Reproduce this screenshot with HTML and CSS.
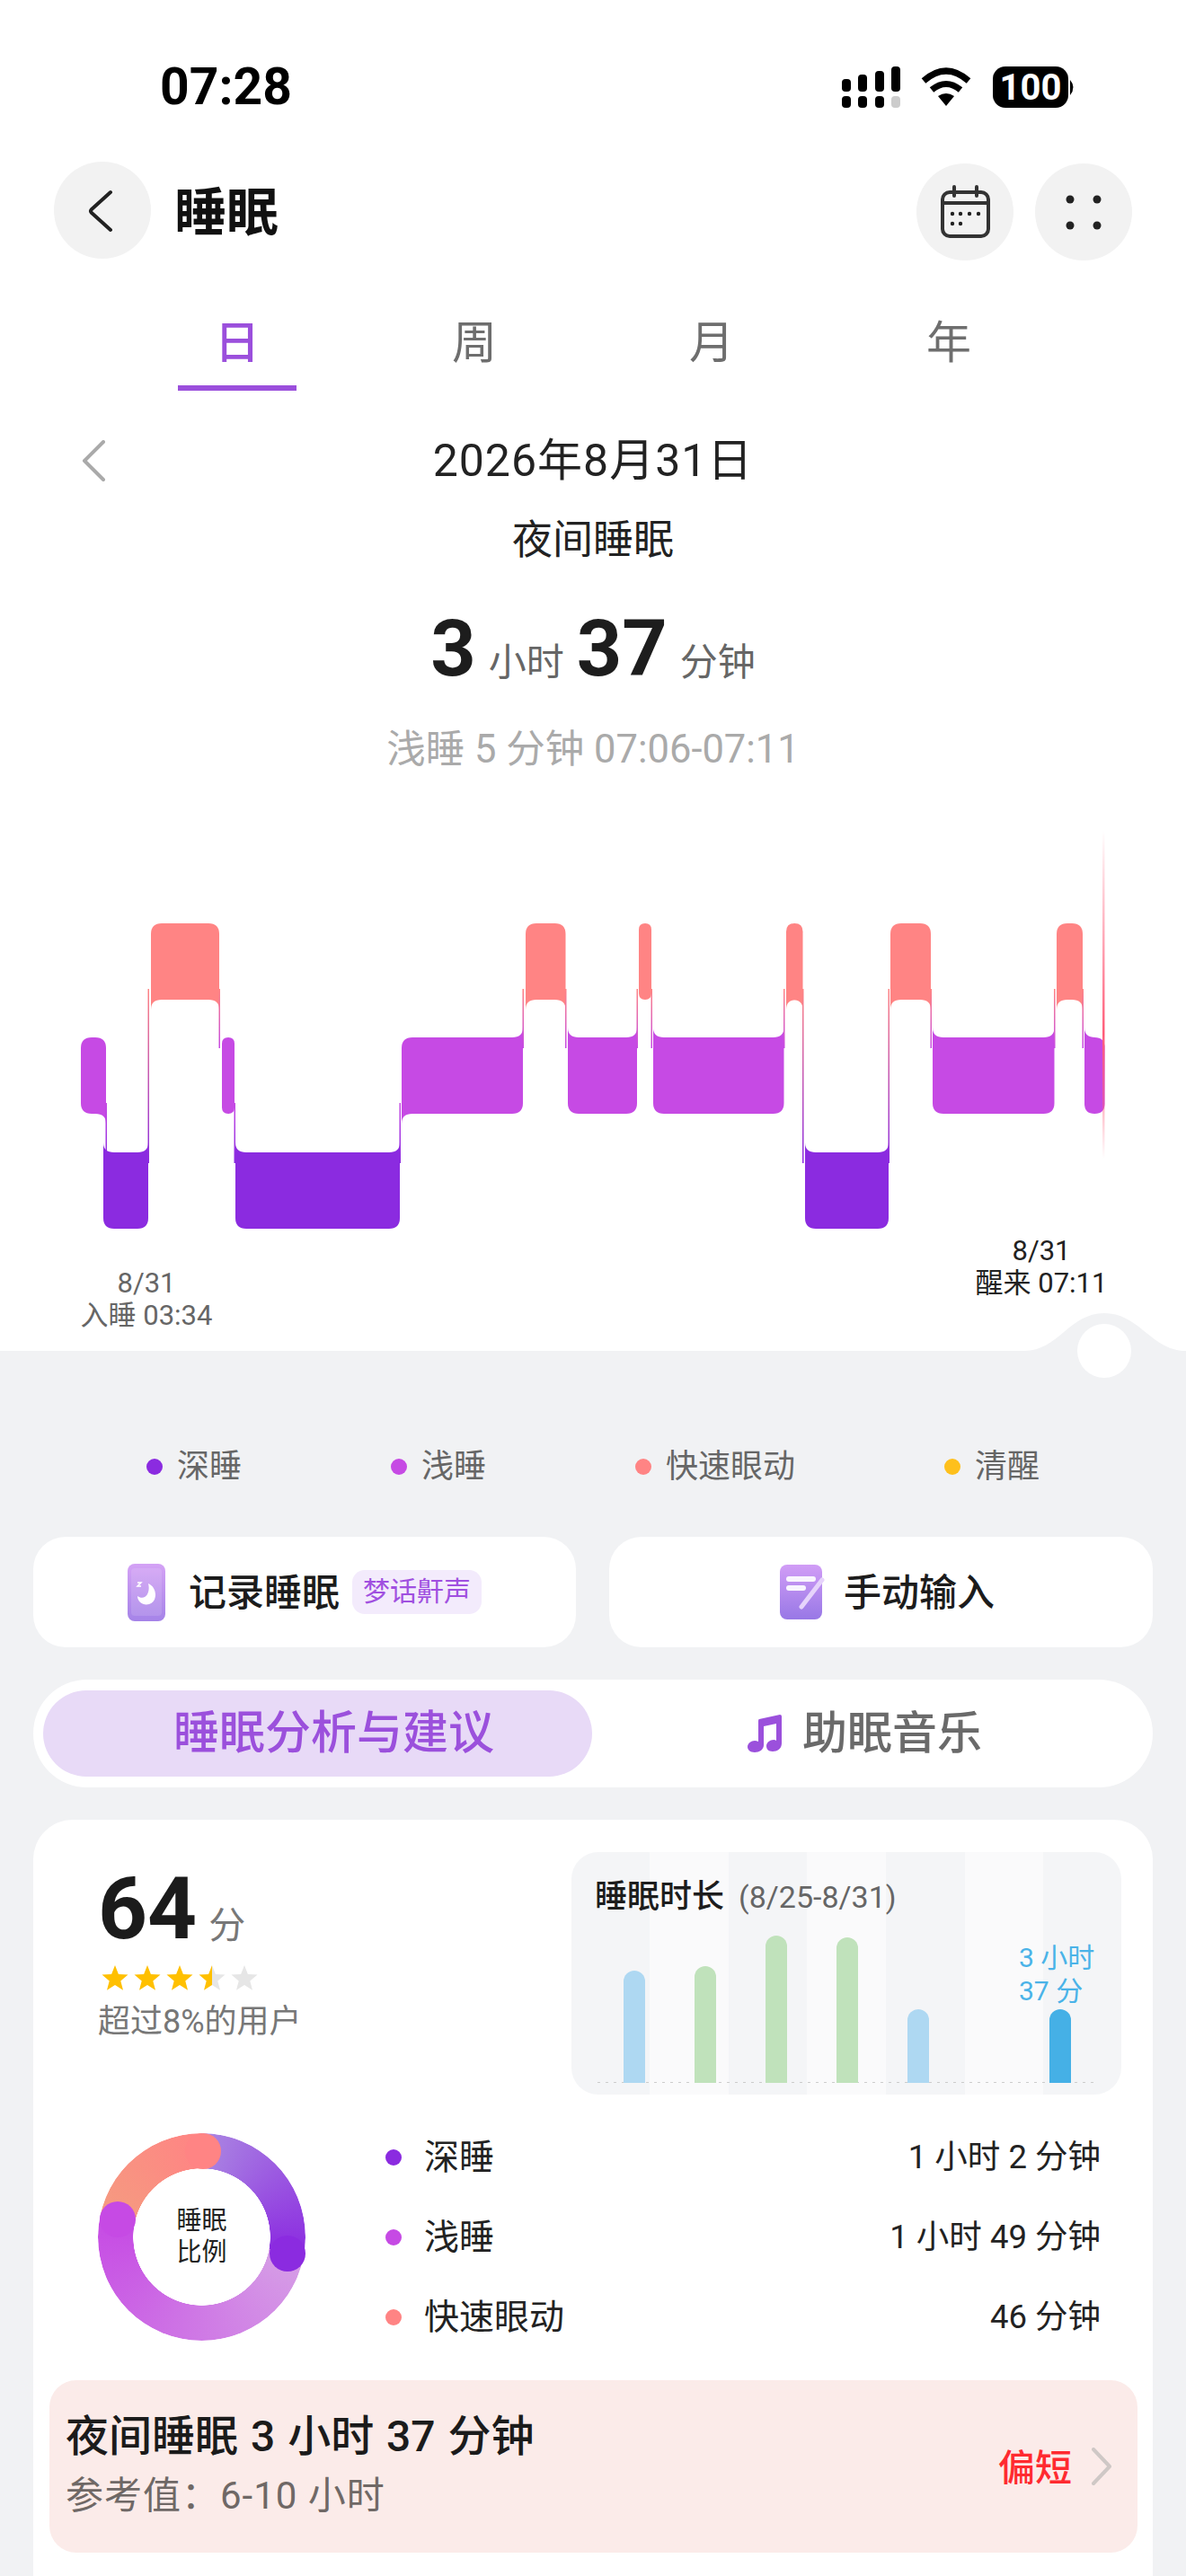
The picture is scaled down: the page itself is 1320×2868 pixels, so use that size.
FILE: index.html
```html
<!DOCTYPE html>
<html lang="zh-CN">

<head>
    <meta charset="UTF-8">
    <meta name="viewport" content="width=device-width, initial-scale=1.0">
    <title>睡眠</title>

    <link rel="stylesheet" href="styles.css">
</head>

<body>
    <header class="top">
        <div class="status">
            <span class="time">07:28</span>
            <svg class="status-icons" width="262" height="50" viewBox="937 72 262 50">
                <g class="ic-black">
                    <rect x="937" y="88" width="10" height="14" rx="4"/>
                    <rect x="955" y="83" width="10" height="19" rx="4"/>
                    <rect x="974" y="79" width="10" height="23" rx="4"/>
                    <rect x="992" y="74" width="10" height="28" rx="4"/>
                    <rect x="937" y="107" width="10" height="13" rx="4"/>
                    <rect x="955" y="107" width="10" height="13" rx="4"/>
                    <rect x="974" y="107" width="10" height="13" rx="4"/>
                    <path d="M1044 107 Q1053 101 1062 107 L1053 118 Z"/>
                    <rect x="1105" y="74" width="84" height="46" rx="14"/>
                    <path d="M1191 89 Q1198 97 1191 106 Z"/>
                </g>
                <rect class="ic-off" x="992" y="107" width="10" height="13" rx="4"/>
                <path class="ic-wifi" d="M1028 90 Q1053 68 1078 90"/>
                <path class="ic-wifi" d="M1037 100 Q1053 87 1069 100"/>
                <text class="batt-text" x="1147" y="111">100</text>
            </svg>
        </div>

        <nav class="nav">
            <button class="round-btn" type="button">
                <svg width="108" height="108" viewBox="60 182 108 108">
                    <path class="ic-line" d="M123 216 L102 235 Q100 237 102 239 L123 258"/>
                </svg>
            </button>
            <h1 class="title">睡眠</h1>
            <div class="nav-right">
                <button class="round-btn" type="button">
                    <svg width="108" height="108" viewBox="1020 184 108 108">
                        <rect class="ic-cal" x="1049" y="216" width="51" height="49" rx="8"/>
                        <path class="ic-cal" d="M1049 228 H1100 M1062 210 V220 M1087 210 V220"/>
                        <g class="ic-dark">
                            <circle cx="1060" cy="240" r="2.2"/>
                            <circle cx="1069" cy="240" r="2.2"/>
                            <circle cx="1079" cy="240" r="2.2"/>
                            <circle cx="1089" cy="240" r="2.2"/>
                            <circle cx="1060" cy="251" r="2.2"/>
                            <circle cx="1069" cy="251" r="2.2"/>
                        </g>
                    </svg>
                </button>
                <button class="round-btn" type="button">
                    <svg width="108" height="108" viewBox="1152 184 108 108">
                        <g class="ic-dark">
                            <circle cx="1191" cy="224" r="4.5"/>
                            <circle cx="1221" cy="224" r="4.5"/>
                            <circle cx="1191" cy="253" r="4.5"/>
                            <circle cx="1221" cy="253" r="4.5"/>
                        </g>
                    </svg>
                </button>
            </div>
        </nav>

        <div class="tabs">
            <div class="tab tab-on"><span>日</span></div>
            <div class="tab"><span>周</span></div>
            <div class="tab"><span>月</span></div>
            <div class="tab"><span>年</span></div>
        </div>

        <div class="date-row">
            <svg width="26" height="46" viewBox="0 0 26 46">
                <path class="ic-prev" d="M24 2 L3 23 L24 44"/>
            </svg>
            <div class="date">2026年8月31日</div>
        </div>
        <div class="night">夜间睡眠</div>
        <div class="total">
            <b>3</b><span>小时</span><b>37</b><span>分钟</span>
        </div>
        <div class="picked">浅睡 5 分钟 07:06-07:11</div>

        <div class="chart">
            <svg id="hypno" class="hypno" width="1320" height="639" viewBox="0 865 1320 639">
                <defs>
                    <linearGradient id="g-0-1" x1="0" y1="0" x2="0" y2="1">
                        <stop offset="0" stop-color="#ff8484"/>
                        <stop offset="1" stop-color="#c64ae4"/>
                    </linearGradient>
                    <linearGradient id="g-0-2" x1="0" y1="0" x2="0" y2="1">
                        <stop offset="0" stop-color="#ff8484"/>
                        <stop offset="1" stop-color="#8b2be0"/>
                    </linearGradient>
                    <linearGradient id="g-1-2" x1="0" y1="0" x2="0" y2="1">
                        <stop offset="0" stop-color="#c64ae4"/>
                        <stop offset="1" stop-color="#8b2be0"/>
                    </linearGradient>
                    <linearGradient id="g-now" x1="0" y1="0" x2="0" y2="1">
                        <stop offset="0" stop-color="#ff5c78" stop-opacity="0"/>
                        <stop offset="0.62" stop-color="#ff5c78"/>
                        <stop offset="1" stop-color="#ff5c78" stop-opacity="0"/>
                    </linearGradient>
                </defs>
                <path class="hump" d="M1140 1504 C1178 1504 1190 1462 1229 1462 C1268 1462 1282 1504 1320 1504 Z"/>
                <circle class="hump-dot" cx="1229" cy="1504" r="30"/>
                <g id="hypno-bars"></g>
                <rect x="1227" y="925" width="2.5" height="365" fill="url(#g-now)"/>
            </svg>
            <div class="mark mark-start">8/31<br>入睡 03:34</div>
            <div class="mark mark-end">8/31<br>醒来 07:11</div>
        </div>
    </header>

    <main>
        <div class="legend">
            <div class="legend-item"><i class="dot dot-deep"></i>深睡</div>
            <div class="legend-item"><i class="dot dot-light"></i>浅睡</div>
            <div class="legend-item"><i class="dot dot-rem"></i>快速眼动</div>
            <div class="legend-item"><i class="dot dot-awake"></i>清醒</div>
        </div>

        <div class="actions">
            <div class="action">
                <svg width="42" height="64" viewBox="0 0 42 64">
                    <defs>
                        <linearGradient id="g-phone" x1="0" y1="0" x2="0" y2="1">
                            <stop offset="0" stop-color="#d4a2f5"/>
                            <stop offset="1" stop-color="#a583e8"/>
                        </linearGradient>
                    </defs>
                    <rect width="42" height="64" rx="8" fill="url(#g-phone)"/>
                    <rect class="ic-phone-in" x="4" y="5" width="34" height="53" rx="4"/>
                    <path class="ic-white" d="M23 22 C33 26 34 42 24 45 C17 47 11 42 11 36 C15 39 20 38 22 34 C24 30 24 26 23 22 Z"/>
                    <path class="ic-z" d="M11 21 H15 L11 25 H15"/>
                </svg>
                <span class="action-text">记录睡眠</span>
                <span class="tag">梦话鼾声</span>
            </div>
            <div class="action action-2">
                <svg width="50" height="62" viewBox="0 0 50 62">
                    <defs>
                        <linearGradient id="g-note" x1="0" y1="0" x2="0" y2="1">
                            <stop offset="0" stop-color="#d19df6"/>
                            <stop offset="1" stop-color="#9878e6"/>
                        </linearGradient>
                    </defs>
                    <rect width="47" height="61" rx="8" fill="url(#g-note)"/>
                    <rect class="ic-white-fill" x="7" y="13" width="33" height="6" rx="3"/>
                    <rect class="ic-white-fill" x="7" y="23" width="22" height="6" rx="3"/>
                    <path class="ic-pen" d="M47 17 L24 47"/>
                </svg>
                <span class="action-text">手动输入</span>
            </div>
        </div>

        <div class="segment">
            <div class="seg-on">睡眠分析与建议</div>
            <div class="seg-off">
                <svg width="38" height="42" viewBox="0 0 38 42">
                    <path class="ic-music" d="M13 5 L36 0 Q38 0 38 2 V32 C38 38 33 41 28 41 C23 41 21 38 21 35 C21 31 25 28 29 28 Q31 28 32 29 V10 L18 13 V34 C18 39 13 42 8 42 C3 42 0 39 0 36 C0 32 4 29 8 29 Q10 29 12 30 V7 Q12 5 13 5 Z"/>
                </svg>
                <span>助眠音乐</span>
            </div>
        </div>

        <section class="card">
            <div class="card-top">
                <div class="score">
                    <div class="score-num"><b>64</b><span>分</span></div>
                    <svg class="stars" width="174" height="30" viewBox="0 0 174 30">
                        <defs>
                            <path id="star" d="M15 0 L18.9 9.9 L29.5 10.6 L21.3 17.4 L24 27.8 L15 22 L6 27.8 L8.7 17.4 L0.5 10.6 L11.1 9.9 Z"/>
                            <linearGradient id="g-half" x1="0" y1="0" x2="1" y2="0">
                                <stop offset="0.5" stop-color="#ffc000"/>
                                <stop offset="0.5" stop-color="#e6e6e6"/>
                            </linearGradient>
                        </defs>
                        <use href="#star" class="star-on"/>
                        <use href="#star" x="36" class="star-on"/>
                        <use href="#star" x="72" class="star-on"/>
                        <use href="#star" x="108" fill="url(#g-half)"/>
                        <use href="#star" x="144" class="star-off"/>
                    </svg>
                    <div class="score-note">超过8%的用户</div>
                </div>
                <div class="week">
                    <div class="week-title">睡眠时长<span>(8/25-8/31)</span></div>
                    <div class="week-bars">
                        <div class="bar bar-blue" style="height:125px"></div>
                        <div class="bar bar-green" style="height:130px"></div>
                        <div class="bar bar-green" style="height:164px"></div>
                        <div class="bar bar-green" style="height:162px"></div>
                        <div class="bar bar-blue" style="height:82px"></div>
                        <div class="bar bar-none"></div>
                        <div class="bar bar-now" style="height:82px">
                            <div class="bar-label">3 小时<br>37 分</div>
                        </div>
                    </div>
                </div>
            </div>

            <div class="ratio">
                <div class="donut">
                    <div class="donut-ring"></div>
                    <i class="cap cap-deep"></i>
                    <i class="cap cap-light"></i>
                    <i class="cap cap-rem"></i>
                    <div class="donut-text">睡眠<br>比例</div>
                </div>
                <ul class="ratio-list">
                    <li><i class="dot dot-deep"></i><span>深睡</span><em>1 小时 2 分钟</em></li>
                    <li><i class="dot dot-light"></i><span>浅睡</span><em>1 小时 49 分钟</em></li>
                    <li><i class="dot dot-rem"></i><span>快速眼动</span><em>46 分钟</em></li>
                </ul>
            </div>

            <div class="verdict">
                <div class="verdict-main">
                    <div class="verdict-title">夜间睡眠 3 小时 37 分钟</div>
                    <div class="verdict-sub">参考值：6-10 小时</div>
                </div>
                <div class="verdict-tag">偏短</div>
                <svg width="22" height="42" viewBox="0 0 22 42">
                    <path class="ic-more" d="M2 2 L20 21 L2 40"/>
                </svg>
            </div>
        </section>
    </main>

    <script src="chart.js"></script>
</body>

</html>
```
FILE: styles.css
```css
* {
    padding: 0;
    margin: 0;
    box-sizing: border-box;
}

body {
    width: 1320px;
    height: 2868px;
    overflow: hidden;
    background-color: #f1f2f4;
    color: #222;
    font-family: Roboto, "Noto Sans CJK SC", sans-serif;
}

i, em {
    font-style: normal;
}

li {
    list-style: none;
}

button {
    border: none;
}

svg {
    display: block;
}

.top {
    height: 1504px;
    background-color: #fff;
}

/* status bar */
.status {
    height: 172px;
    padding: 72px 121px 0 178px;
    display: flex;
    justify-content: space-between;
    align-items: flex-start;
}

.time {
    font-size: 57px;
    line-height: 50px;
    font-weight: 700;
    color: #000;
}

.ic-black { fill: #000; }
.ic-off { fill: #ccc; }

.ic-wifi {
    fill: none;
    stroke: #000;
    stroke-width: 7;
}

.batt-text {
    fill: #fff;
    font-size: 40px;
    font-weight: 700;
    text-anchor: middle;
}

/* nav */
.nav {
    height: 112px;
    margin-top: 8px;
    padding: 0 60px;
    display: flex;
    align-items: flex-start;
}

.round-btn {
    width: 108px;
    height: 108px;
    border-radius: 50%;
    background-color: #f2f2f2;
}

.title {
    margin-left: 26px;
    padding-top: 3px;
    font-size: 58px;
    line-height: 108px;
    font-weight: 700;
    color: #111;
}

.nav-right {
    margin-left: auto;
    margin-top: 2px;
    display: flex;
    gap: 24px;
}

.ic-line, .ic-cal, .ic-prev, .ic-more {
    fill: none;
    stroke-linecap: round;
    stroke-linejoin: round;
}

.ic-line { stroke: #222; stroke-width: 4; }
.ic-cal { stroke: #333; stroke-width: 4; }
.ic-dark { fill: #222; }
.ic-prev { stroke: #aaa; stroke-width: 4; }
.ic-more { stroke: #cfc8c6; stroke-width: 4; }

/* tabs */
.tabs {
    margin-top: 65px;
    padding: 0 132px;
    display: grid;
    grid-template-columns: repeat(4, 1fr);
}

.tab {
    display: flex;
    justify-content: center;
    font-size: 50px;
    color: #6e6e6e;
}

.tab span {
    width: 132px;
    height: 78px;
    line-height: 50px;
    text-align: center;
}

.tab-on {
    color: #9b4fdc;
    font-weight: 500;
}

.tab-on span {
    border-bottom: 6px solid #9b4fdc;
}

/* day summary */
.date-row {
    height: 60px;
    margin-top: 48px;
    padding: 0 91px;
    display: grid;
    grid-template-columns: 1fr auto 1fr;
    align-items: center;
}

.date {
    font-size: 50px;
    line-height: 60px;
    letter-spacing: 1px;
    color: #222;
}

.night {
    margin-top: 29px;
    font-size: 45px;
    line-height: 60px;
    text-align: center;
}

.total {
    height: 100px;
    margin-top: 40px;
    display: flex;
    justify-content: center;
    align-items: baseline;
    font-size: 42px;
    line-height: 100px;
    color: #666;
}

.total b {
    font-size: 88px;
    color: #1d1d1d;
}

.total span {
    margin: 0 14px;
}

.total span:last-child {
    margin-right: 0;
}

.picked {
    margin-top: 33px;
    font-size: 43.5px;
    line-height: 60px;
    text-align: center;
    color: #aaa;
}

/* hypnogram */
.chart {
    position: relative;
    height: 639px;
}

.hypno {
    overflow: visible;
}

.hump { fill: #f1f2f4; }
.hump-dot { fill: #fff; }

.lvl-0 { fill: #ff8484; }
.lvl-1 { fill: #c64ae4; }
.lvl-2 { fill: #8b2be0; }

.mark {
    position: absolute;
    font-size: 31px;
    line-height: 36px;
    text-align: center;
}

.mark-start {
    left: 88px;
    top: 546px;
    width: 150px;
    color: #666;
}

.mark-end {
    left: 1084px;
    top: 510px;
    width: 150px;
    color: #222;
}

/* lower part */
.legend {
    margin-top: 104px;
    padding-left: 163px;
    display: flex;
    gap: 166px;
}

.legend-item {
    display: flex;
    align-items: center;
    font-size: 36px;
    line-height: 50px;
    color: #666;
}

.legend-item .dot {
    margin-right: 16px;
}

.dot {
    flex: none;
    width: 18px;
    height: 18px;
    border-radius: 50%;
}

.dot-deep { background-color: #8b2be0; }
.dot-light { background-color: #c64ae4; }
.dot-rem { background-color: #ff8484; }
.dot-awake { background-color: #fec01c; }

.actions {
    margin-top: 53px;
    padding: 0 37px;
    display: grid;
    grid-template-columns: 604px 605px;
    column-gap: 37px;
}

.action {
    height: 123px;
    border-radius: 36px;
    background-color: #fff;
    display: flex;
    justify-content: center;
    align-items: center;
    gap: 26px;
}

.action-2 {
    padding-left: 14px;
    gap: 21px;
}

.action-text {
    padding-bottom: 6px;
    font-size: 42px;
    font-weight: 500;
    color: #1c1c1c;
}

.tag {
    margin-left: -12px;
    width: 144px;
    height: 49px;
    border-radius: 14px;
    background-color: #f3ebfc;
    color: #a050e0;
    font-size: 30px;
    line-height: 47px;
    text-align: center;
}

.ic-phone-in { fill: #fff; opacity: 0.12; }
.ic-white { fill: #fff; }
.ic-white-fill { fill: #fff; opacity: 0.9; }

.ic-z {
    fill: none;
    stroke: #fff;
    stroke-width: 1.5;
}

.ic-pen {
    fill: none;
    stroke: #e6d3fb;
    stroke-width: 5;
    stroke-linecap: round;
}

.segment {
    height: 120px;
    margin: 36px 37px 0;
    padding: 12px 11px;
    border-radius: 60px;
    background-color: #fff;
    display: flex;
    font-size: 51px;
    font-weight: 500;
    line-height: 96px;
}

.seg-on {
    width: 611px;
    padding-left: 36px;
    border-radius: 48px;
    background-color: #e8daf7;
    color: #9b50dc;
    text-align: center;
}

.seg-off {
    flex: 1;
    padding-right: 6px;
    display: flex;
    justify-content: center;
    align-items: center;
    gap: 23px;
    font-size: 50px;
    color: #6a6a6a;
}

.ic-music { fill: #9b50dc; }

.card {
    height: 842px;
    margin: 36px 37px 0;
    padding-top: 36px;
    border-radius: 44px 44px 0 0;
    background-color: #fff;
}

.card-top {
    height: 270px;
    padding: 0 35px 0 72px;
    display: flex;
    justify-content: space-between;
}

.score {
    padding-top: 15px;
}

.score-num {
    display: flex;
    align-items: baseline;
    height: 96px;
    line-height: 96px;
}

.score-num b {
    font-size: 96px;
    color: #1b1b1b;
}

.score-num span {
    margin-left: 13px;
    font-size: 41px;
    color: #777;
}

.stars {
    margin: 15px 0 0 4px;
}

.star-on { fill: #ffc000; }
.star-off { fill: #e6e6e6; }

.score-note {
    margin-top: 13px;
    font-size: 36px;
    line-height: 40px;
    color: #777;
}

.week {
    width: 612px;
    padding-bottom: 13px;
    border-radius: 30px;
    background: repeating-linear-gradient(90deg, #f4f5f7 0 87.5px, #fafafb 87.5px 175px);
    display: flex;
    flex-direction: column;
}

.week-title {
    padding: 26px 0 0 26px;
    font-size: 36px;
    font-weight: 500;
    line-height: 48px;
    color: #1d1d1d;
}

.week-title span {
    margin-left: 16px;
    font-size: 34px;
    font-weight: 400;
    color: #666;
}

.week-bars {
    flex: 1;
    margin: 0 28px 0 29px;
    padding-left: 29px;
    background: repeating-linear-gradient(90deg, #ccc 0 3px, transparent 3px 9px) bottom / 100% 1px no-repeat;
    display: flex;
    align-items: flex-end;
    gap: 55.5px;
}

.bar {
    position: relative;
    width: 23.5px;
    border-radius: 12px 12px 0 0;
}

.bar-blue { background-color: #aed8f2; }
.bar-green { background-color: #c0e2bb; }
.bar-now { background-color: #45b0e6; }

.bar-label {
    position: absolute;
    left: -34px;
    bottom: 100%;
    margin-bottom: 2px;
    white-space: nowrap;
    font-size: 30px;
    line-height: 37px;
    color: #4ab3e8;
}

.ratio {
    margin-top: 25px;
    padding-left: 72px;
    display: flex;
    align-items: center;
}

.donut {
    position: relative;
    flex: none;
    width: 231px;
    height: 231px;
}

.donut-ring {
    width: 100%;
    height: 100%;
    border-radius: 50%;
    background: conic-gradient(#ab87e2 0deg, #8b2be0 100deg, #d69fe6 100deg, #c64ae4 282deg, #f59b80 282deg, #ff8484 360deg);
    -webkit-mask: radial-gradient(circle, transparent 76px, #000 76.5px);
    mask: radial-gradient(circle, transparent 76px, #000 76.5px);
}

.cap {
    position: absolute;
    width: 40px;
    height: 40px;
    border-radius: 50%;
}

.cap-deep { left: 191px; top: 114px; background-color: #8b2be0; }
.cap-light { left: 1.5px; top: 76px; background-color: #c64ae4; }
.cap-rem { left: 97px; top: 0; background-color: #ff8484; }

.donut-text {
    position: absolute;
    left: 0;
    right: 0;
    top: 80px;
    font-size: 28px;
    line-height: 35px;
    text-align: center;
}

.ratio-list {
    flex: 1;
    margin-left: 89px;
    padding-right: 58px;
}

.ratio-list li {
    height: 89px;
    display: flex;
    align-items: center;
    color: #222;
}

.ratio-list span {
    margin-left: 25px;
    padding-bottom: 7px;
    font-size: 39px;
}

.ratio-list em {
    margin-left: auto;
    padding-bottom: 7px;
    font-size: 36.5px;
}

.verdict {
    height: 192px;
    margin: 26px 17px 0 18px;
    padding: 0 29px 0 18px;
    border-radius: 30px;
    background-color: #fbebe9;
    display: flex;
    align-items: center;
}

.verdict-main {
    flex: 1;
}

.verdict-title {
    font-size: 48px;
    font-weight: 500;
    word-spacing: 2px;
    line-height: 60px;
    color: #1b1b1b;
}

.verdict-sub {
    margin-top: 6px;
    font-size: 42px;
    letter-spacing: 1px;
    line-height: 60px;
    color: #6f6866;
}

.verdict-tag {
    margin-right: 22px;
    padding-bottom: 4px;
    font-size: 41px;
    font-weight: 500;
    color: #ff2a30;
}
```
FILE: chart.js
```js
// level: 0 = rem, 1 = light, 2 = deep
const TOPS = [1028, 1155, 1283];
const BAND = 85;
const R = 12;
const F = 11;

const segs = [
    { x0: 90, x1: 118, l: 1 },
    { x0: 115, x1: 165, l: 2 },
    { x0: 168, x1: 244, l: 0 },
    { x0: 247, x1: 261, l: 1 },
    { x0: 262, x1: 445, l: 2 },
    { x0: 447, x1: 582, l: 1 },
    { x0: 585, x1: 629.5, l: 0 },
    { x0: 632, x1: 709, l: 1 },
    { x0: 711, x1: 725, l: 0 },
    { x0: 727, x1: 872.5, l: 1 },
    { x0: 875, x1: 893.5, l: 0 },
    { x0: 896, x1: 989, l: 2 },
    { x0: 991, x1: 1036, l: 0 },
    { x0: 1038, x1: 1173.5, l: 1 },
    { x0: 1176, x1: 1205, l: 0 },
    { x0: 1207, x1: 1229.5, l: 1 }
];

function segPath(s, tl, tr, br, bl) {
    const t = TOPS[s.l];
    const b = t + BAND;
    return "M" + (s.x0 + tl) + " " + t +
        " H" + (s.x1 - tr) + " Q" + s.x1 + " " + t + " " + s.x1 + " " + (t + tr) +
        " V" + (b - br) + " Q" + s.x1 + " " + b + " " + (s.x1 - br) + " " + b +
        " H" + (s.x0 + bl) + " Q" + s.x0 + " " + b + " " + s.x0 + " " + (b - bl) +
        " V" + (t + tl) + " Q" + s.x0 + " " + t + " " + (s.x0 + tl) + " " + t + " Z";
}

// small concave corner hanging off a segment, dx points into the segment, dy away from it
function fillet(x, y, dx, dy, l) {
    return '<path class="lvl-' + l + '" d="M' + x + " " + y + " V" + (y + dy * F) +
        " Q" + x + " " + y + " " + (x + dx * R) + " " + y + ' Z"/>';
}

let html = "";

segs.forEach(function (s, i) {
    const prev = segs[i - 1];
    const next = segs[i + 1];
    const w = s.x1 - s.x0;
    const r = Math.min(R, w / 2);
    const t = TOPS[s.l];
    const b = t + BAND;
    let tl = r, tr = r, br = r, bl = r;

    if (w >= 16) {
        if (prev) {
            if (prev.l < s.l) {
                tl = 0;
                html += fillet(s.x0, t, 1, -1, s.l);
            } else {
                bl = 0;
                html += fillet(s.x0, b, 1, 1, s.l);
            }
        }
        if (next) {
            if (next.l < s.l) {
                tr = 0;
                html += fillet(s.x1, t, -1, -1, s.l);
            } else {
                br = 0;
                html += fillet(s.x1, b, -1, 1, s.l);
            }
        }
    }
    html += '<path class="lvl-' + s.l + '" d="' + segPath(s, tl, tr, br, bl) + '"/>';

    // thin line down to the next stage
    if (next) {
        const up = Math.min(s.l, next.l);
        const down = Math.max(s.l, next.l);
        const y0 = TOPS[up] + BAND - 12;
        const y1 = TOPS[down] + 12;
        html += '<rect x="' + (s.x1 - 0.5) + '" y="' + y0 + '" width="1.5" height="' + (y1 - y0) +
            '" fill="url(#g-' + up + "-" + down + ')"/>';
    }
});

document.querySelector("#hypno-bars").innerHTML = html;
```
